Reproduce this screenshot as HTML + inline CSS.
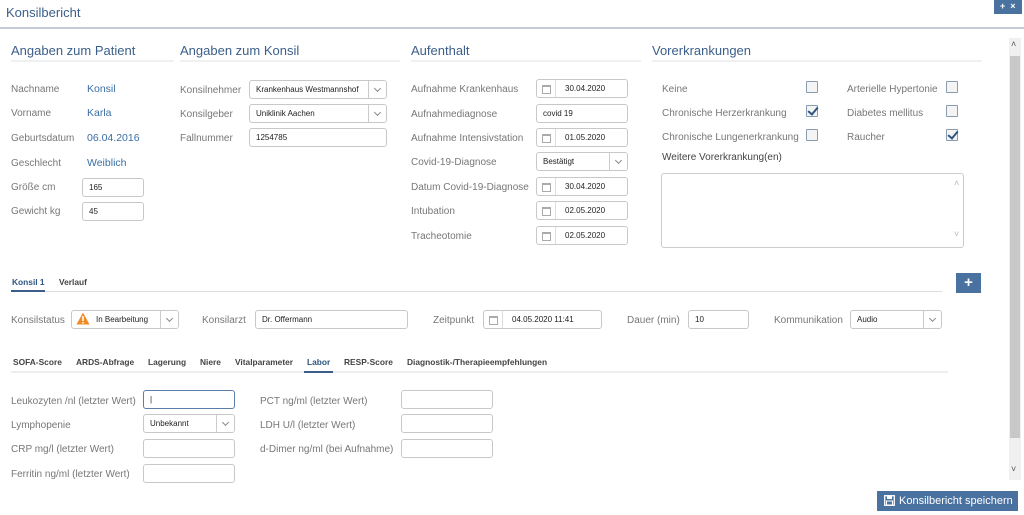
<!DOCTYPE html>
<html><head><meta charset="utf-8"><style>
*{box-sizing:border-box;margin:0;padding:0}
body{width:1024px;height:515px;overflow:hidden;background:#fff;font-family:"Liberation Sans",sans-serif;position:relative}
.a{position:absolute;white-space:nowrap}
.l{font-size:10px;color:#777;line-height:14px;padding-top:2px}
.v{font-size:10.5px;color:#3a6ea5;line-height:14px}
.h{font-size:13px;color:#3b5f8a;line-height:16px}
.hl{position:absolute;height:2px;background:#eef0f2}
.in{position:absolute;border:1px solid #c8c8c8;border-radius:3px;height:19px;font-size:8px;color:#222;line-height:17px;padding-left:6px;background:#fff;white-space:nowrap;overflow:hidden}
.sel .ar{position:absolute;right:0;top:0;width:18px;height:17px;border-left:1px solid #ccc;background:#fff}
.sel .ar:after{content:"";position:absolute;left:6px;top:5px;width:4px;height:4px;border-right:1px solid #888;border-bottom:1px solid #888;transform:rotate(45deg)}
.dt{padding-left:28px}
.dt:before{content:"";position:absolute;left:0;top:0;width:18px;height:17px;border-right:1px solid #ddd}
.dt:after{content:"";position:absolute;left:5px;top:5px;width:7px;height:6px;border:1px solid #aaa;border-top-width:2px}
.cb{position:absolute;width:12px;height:12px;border:1px solid #8a9bb0;border-radius:1px;background:#f4f4f4}
.ck:after{content:"";position:absolute;left:3px;top:-1px;width:4px;height:8px;border-right:2.5px solid #2d5580;border-bottom:2.5px solid #2d5580;transform:rotate(40deg)}
.t{font-size:8.4px;font-weight:bold;color:#444;line-height:12px}
</style></head><body>
<div class="a" style="left:6px;top:5px;font-size:13px;color:#3b5f8a">Konsilbericht</div>
<div style="position:absolute;left:0;top:27px;width:1024px;height:2px;background:#c4cdd6"></div>
<div style="position:absolute;left:994px;top:0;width:28px;height:14px;background:#4a72a0;color:#fff;font-size:9px;font-weight:bold;line-height:13px;padding-left:6px">+ &nbsp;×</div>
<div style="position:absolute;left:1009px;top:38px;width:12px;height:442px;background:#f0f0f0"></div>
<div style="position:absolute;left:1010px;top:56px;width:10px;height:382px;background:#c8c8c8"></div>
<div class="a" style="left:1011px;top:39px;font-size:9px;color:#555">&#x2c4;</div>
<div class="a" style="left:1011px;top:464px;font-size:9px;color:#555">&#x2c5;</div>

<div class="a h" style="left:11px;top:43px">Angaben zum Patient</div>
<div class="hl" style="left:11px;top:60px;width:163px"></div>
<div class="a h" style="left:180px;top:43px">Angaben zum Konsil</div>
<div class="hl" style="left:180px;top:60px;width:220px"></div>
<div class="a h" style="left:411px;top:43px">Aufenthalt</div>
<div class="hl" style="left:411px;top:60px;width:230px"></div>
<div class="a h" style="left:652px;top:43px">Vorerkrankungen</div>
<div class="hl" style="left:652px;top:60px;width:330px"></div>

<div class="a l" style="left:11px;top:81px">Nachname</div><div class="a v" style="left:87px;top:82px">Konsil</div>
<div class="a l" style="left:11px;top:105px">Vorname</div><div class="a v" style="left:87px;top:106px">Karla</div>
<div class="a l" style="left:11px;top:130px">Geburtsdatum</div><div class="a v" style="left:87px;top:131px">06.04.2016</div>
<div class="a l" style="left:11px;top:155px">Geschlecht</div><div class="a v" style="left:87px;top:156px">Weiblich</div>
<div class="a l" style="left:11px;top:179px">Größe cm</div><div class="in" style="left:82px;top:178px;width:62px">165</div>
<div class="a l" style="left:11px;top:203px">Gewicht kg</div><div class="in" style="left:82px;top:202px;width:62px">45</div>

<div class="a l" style="left:180px;top:82px">Konsilnehmer</div><div class="in sel" style="left:249px;top:80px;width:138px">Krankenhaus Westmannshof<span class="ar"></span></div>
<div class="a l" style="left:180px;top:106px">Konsilgeber</div><div class="in sel" style="left:249px;top:104px;width:138px">Uniklinik Aachen<span class="ar"></span></div>
<div class="a l" style="left:180px;top:130px">Fallnummer</div><div class="in" style="left:249px;top:128px;width:138px">1254785</div>

<div class="a l" style="left:411px;top:81px">Aufnahme Krankenhaus</div><div class="in dt" style="left:536px;top:79px;width:92px">30.04.2020</div>
<div class="a l" style="left:411px;top:106px">Aufnahmediagnose</div><div class="in" style="left:536px;top:104px;width:92px">covid 19</div>
<div class="a l" style="left:411px;top:130px">Aufnahme Intensivstation</div><div class="in dt" style="left:536px;top:128px;width:92px">01.05.2020</div>
<div class="a l" style="left:411px;top:154px">Covid-19-Diagnose</div><div class="in sel" style="left:536px;top:152px;width:92px">Bestätigt<span class="ar"></span></div>
<div class="a l" style="left:411px;top:179px">Datum Covid-19-Diagnose</div><div class="in dt" style="left:536px;top:177px;width:92px">30.04.2020</div>
<div class="a l" style="left:411px;top:203px">Intubation</div><div class="in dt" style="left:536px;top:201px;width:92px">02.05.2020</div>
<div class="a l" style="left:411px;top:228px">Tracheotomie</div><div class="in dt" style="left:536px;top:226px;width:92px">02.05.2020</div>

<div class="a l" style="left:662px;top:81px">Keine</div><div class="cb" style="left:806px;top:81px"></div>
<div class="a l" style="left:662px;top:105px">Chronische Herzerkrankung</div><div class="cb ck" style="left:806px;top:105px"></div>
<div class="a l" style="left:662px;top:129px">Chronische Lungenerkrankung</div><div class="cb" style="left:806px;top:129px"></div>
<div class="a l" style="left:847px;top:81px">Arterielle Hypertonie</div><div class="cb" style="left:946px;top:81px"></div>
<div class="a l" style="left:847px;top:105px">Diabetes mellitus</div><div class="cb" style="left:946px;top:105px"></div>
<div class="a l" style="left:847px;top:129px">Raucher</div><div class="cb ck" style="left:946px;top:129px"></div>
<div class="a" style="left:662px;top:152px;font-size:10px;color:#444">Weitere Vorerkrankung(en)</div>
<div style="position:absolute;left:661px;top:173px;width:303px;height:75px;border:1px solid #ccc;border-radius:3px"></div>
<div class="a" style="left:954px;top:178px;font-size:9px;color:#bbb">&#x2c4;</div>
<div class="a" style="left:954px;top:229px;font-size:9px;color:#bbb">&#x2c5;</div>

<div class="a t" style="left:12px;top:276px;color:#2d5580">Konsil 1</div>
<div class="a t" style="left:59px;top:276px">Verlauf</div>
<div style="position:absolute;left:11px;top:291px;width:931px;height:1px;background:#ddd"></div>
<div style="position:absolute;left:11px;top:290px;width:34px;height:2px;background:#3b5f8a"></div>
<div style="position:absolute;left:956px;top:273px;width:25px;height:20px;background:#4a72a0;color:#fff;font-size:15px;font-weight:bold;text-align:center;line-height:19px">+</div>

<div class="a l" style="left:11px;top:312px">Konsilstatus</div>
<div class="in sel" style="left:71px;top:310px;width:108px;padding-left:24px">In Bearbeitung<span class="ar"></span></div>
<svg style="position:absolute;left:76px;top:312px" width="14" height="13" viewBox="0 0 14 13"><path d="M7 0.5 L13.5 12.5 H0.5 Z" fill="#f08a24"/><rect x="6.2" y="4" width="1.6" height="5" fill="#fff"/><rect x="6.2" y="10" width="1.6" height="1.5" fill="#fff"/></svg>
<div class="a l" style="left:202px;top:312px">Konsilarzt</div><div class="in" style="left:255px;top:310px;width:153px">Dr. Offermann</div>
<div class="a l" style="left:433px;top:312px">Zeitpunkt</div><div class="in dt" style="left:483px;top:310px;width:119px">04.05.2020 11:41</div>
<div class="a l" style="left:627px;top:312px">Dauer (min)</div><div class="in" style="left:688px;top:310px;width:61px">10</div>
<div class="a l" style="left:774px;top:312px">Kommunikation</div><div class="in sel" style="left:850px;top:310px;width:92px">Audio<span class="ar"></span></div>

<div class="a t" style="left:13px;top:356px">SOFA-Score</div>
<div class="a t" style="left:76px;top:356px">ARDS-Abfrage</div>
<div class="a t" style="left:148px;top:356px">Lagerung</div>
<div class="a t" style="left:200px;top:356px">Niere</div>
<div class="a t" style="left:235px;top:356px">Vitalparameter</div>
<div class="a t" style="left:307px;top:356px;color:#2d5580">Labor</div>
<div class="a t" style="left:344px;top:356px">RESP-Score</div>
<div class="a t" style="left:407px;top:356px">Diagnostik-/Therapieempfehlungen</div>
<div style="position:absolute;left:11px;top:371px;width:937px;height:2px;background:#eee"></div>
<div style="position:absolute;left:304px;top:371px;width:29px;height:2px;background:#3b5f8a"></div>

<div class="a l" style="left:11px;top:393px">Leukozyten /nl (letzter Wert)</div><div class="in" style="left:143px;top:390px;width:92px;border-color:#5a7ea8;border-width:1.5px">|</div>
<div class="a l" style="left:11px;top:417px">Lymphopenie</div><div class="in sel" style="left:143px;top:414px;width:92px">Unbekannt<span class="ar"></span></div>
<div class="a l" style="left:11px;top:441px">CRP mg/l (letzter Wert)</div><div class="in" style="left:143px;top:439px;width:92px"></div>
<div class="a l" style="left:11px;top:466px">Ferritin ng/ml (letzter Wert)</div><div class="in" style="left:143px;top:464px;width:92px"></div>
<div class="a l" style="left:260px;top:393px">PCT ng/ml (letzter Wert)</div><div class="in" style="left:401px;top:390px;width:92px"></div>
<div class="a l" style="left:260px;top:417px">LDH U/l (letzter Wert)</div><div class="in" style="left:401px;top:414px;width:92px"></div>
<div class="a l" style="left:260px;top:441px">d-Dimer ng/ml (bei Aufnahme)</div><div class="in" style="left:401px;top:439px;width:92px"></div>

<div style="position:absolute;left:877px;top:491px;width:141px;height:20px;background:#4a72a0;color:#fff;font-size:11px;line-height:20px;padding-left:22px;white-space:nowrap">Konsilbericht speichern</div>
<svg style="position:absolute;left:884px;top:495px" width="11" height="11" viewBox="0 0 11 11"><rect x="0.7" y="0.7" width="9.6" height="9.6" fill="none" stroke="#fff" stroke-width="1.3"/><rect x="3" y="1" width="5" height="3" fill="#fff"/><rect x="2.5" y="6" width="6" height="4" fill="none" stroke="#fff"/></svg>
</body></html>
